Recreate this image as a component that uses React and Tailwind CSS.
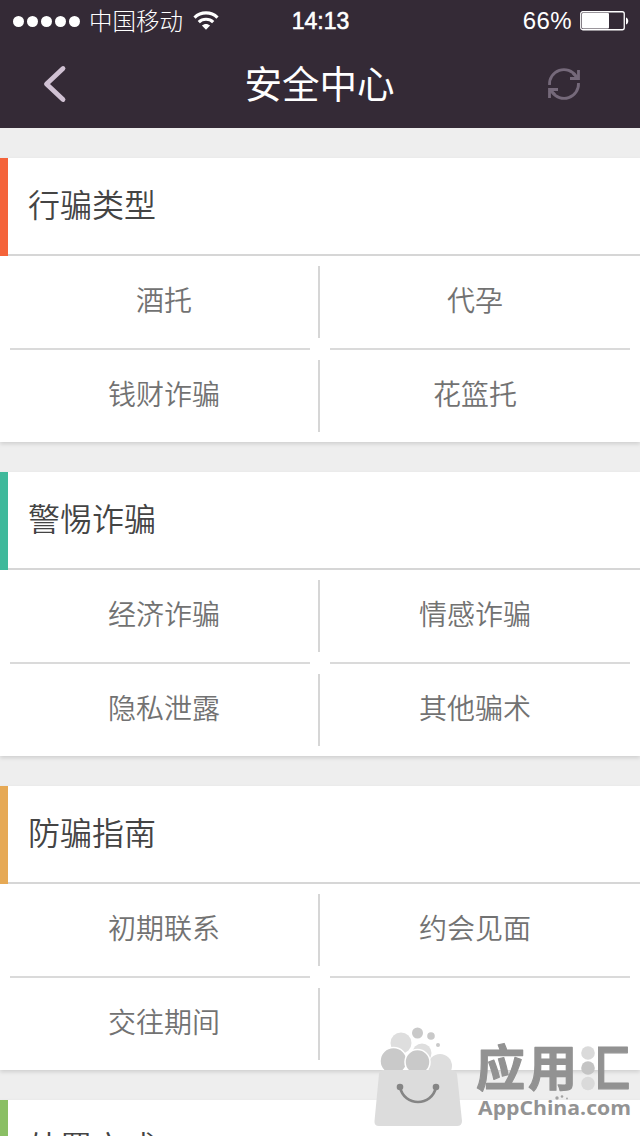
const sections = [
  {
    title: '行骗类型',
    accent: 'bg-[#f4633a]',
    rows: [['酒托', '代孕'], ['钱财诈骗', '花篮托']],
  },
  {
    title: '警惕诈骗',
    accent: 'bg-[#3fb99b]',
    rows: [['经济诈骗', '情感诈骗'], ['隐私泄露', '其他骗术']],
  },
  {
    title: '防骗指南',
    accent: 'bg-[#e6a955]',
    rows: [['初期联系', '约会见面'], ['交往期间', '']],
  },
  {
    title: '处置方式',
    accent: 'bg-[#8abf64]',
    rows: [],
  },
]

function StatusBar() {
  return (
    <div className="grid grid-cols-3 items-center h-10 pl-[13px] pr-[11px] text-[23px] leading-10">
      <div className="flex items-center">
        <div className="flex gap-[3px]">
          {[0, 1, 2, 3, 4].map((i) => (
            <span key={i} className="w-[11px] h-[11px] rounded-full bg-white" />
          ))}
        </div>
        <span className="ml-[9px] pt-0.5 text-[23.5px] font-light whitespace-nowrap">中国移动</span>
        <svg className="ml-[10px] shrink-0" width="26" height="20" viewBox="0 0 26 20" fill="none" stroke="#fff" strokeWidth="3.2">
          <path d="M1.5 6.6C8 .4 18 .4 24.5 6.6" />
          <path d="M5.8 11.1C9.8 7.3 16.2 7.3 20.2 11.1" />
          <path d="M13 18.8L8.9 14.6C11.2 12.5 14.8 12.5 17.1 14.6Z" fill="#fff" stroke="none" />
        </svg>
      </div>
      <span className="-ml-px text-center [-webkit-text-stroke:0.6px_#fff]">14:13</span>
      <div className="flex items-center justify-end">
        <span className="text-[24px] tracking-[0.4px]">66%</span>
        <svg className="ml-2" width="49" height="20" viewBox="0 0 49 20">
          <rect x="0.75" y="0.75" width="43.5" height="18" rx="2" fill="none" stroke="#fff" strokeWidth="1.3" />
          <rect x="2" y="2" width="27" height="15.5" rx="1" fill="#fff" />
          <path d="M46 6.5C49 7.5 49 12.5 46 13.5Z" fill="#fff" />
        </svg>
      </div>
    </div>
  )
}

function NavBar() {
  return (
    <div className="flex items-center justify-between h-[88px] pl-[43px] pr-[58px]">
      <svg width="24" height="38" viewBox="0 0 24 38" fill="none" stroke="#d0c1d3" strokeWidth="4.8" strokeLinecap="round" strokeLinejoin="round">
        <path d="M20 3.5L3.5 19L20 34.5" />
      </svg>
      <h1 className="ml-[26px] pt-[3px] text-[37.5px] leading-none">安全中心</h1>
      <svg width="36" height="36" viewBox="0 0 36 36" fill="none" stroke="#75697a" strokeWidth="2.8">
        <path d="M3.5 19A14.500 14.500 0 0 1 30 10" />
        <path d="M32.5 17A14.500 14.500 0 0 1 6 26" />
        <path d="M32.5 4V12.5H24M32 12L27 7.5" />
        <path d="M3.5 32V23.5H12M4 24L9 28.5" />
      </svg>
    </div>
  )
}

function Section({ title, accent, rows }) {
  return (
    <section className="bg-white shadow-[0_2px_4px_rgba(0,0,0,0.13)]">
      <div className="flex h-[98px]">
        <div className={`w-2 ${accent}`} />
        <h2 className="flex-1 pl-5 pt-6 border-b-2 border-[#d6d6d6] text-[32px] leading-[48px] font-[350] text-[#444444]">
          {title}
        </h2>
      </div>
      {rows.map(([left, right], i) => (
        <div key={left}>
          {i > 0 && (
            <div className="flex justify-between px-[10px]">
              <div className="w-[300px] h-0.5 bg-[#dadada]" />
              <div className="w-[300px] h-0.5 bg-[#dadada]" />
            </div>
          )}
          <div className="flex h-[92px] px-[10px] py-[10px] text-center text-[28px] leading-[72px] font-[350] text-[#727272]">
            <div className="w-[310px] border-r-2 border-[#d6d6d6]">{left}</div>
            <div className="w-[310px]">{right}</div>
          </div>
        </div>
      ))}
    </section>
  )
}

function Watermark() {
  return (
    <svg className="absolute left-[360px] top-[1010px]" width="280" height="126" viewBox="0 0 280 126">
      <defs>
        {/* hides the water radical, the three dots stand in for it */}
        <clipPath id="hui">
          <rect x="238" y="20" width="42" height="70" />
        </clipPath>
      </defs>
      <g fill="#dedede">
        <circle cx="62" cy="43" r="9.5" />
        <circle cx="41" cy="33" r="10.5" />
        <circle cx="80" cy="56" r="12" />
      </g>
      <g fill="#c9c9c9">
        <circle cx="57.5" cy="23" r="5.5" />
        <circle cx="71" cy="26" r="3.8" />
        <circle cx="78" cy="35" r="2" />
        <circle cx="33.5" cy="51" r="13.5" stroke="#fff" strokeWidth="1.5" />
        <circle cx="57.5" cy="52" r="12.5" stroke="#fff" strokeWidth="1.5" />
      </g>
      <path d="M24 60H92Q96 60 97 64L102 111Q102 116 97 116H19Q14 116 14.5 111L19 64Q20 60 24 60Z" fill="#dcdcdc" />
      <g fill="#858585">
        <circle cx="40" cy="77" r="3.3" />
        <circle cx="76" cy="77" r="3.3" />
      </g>
      <path d="M40 77C44 97 72 97 76 77" fill="none" stroke="#858585" strokeWidth="2.7" />
      <g fill="#929292" stroke="#929292" strokeWidth="1.2" strokeLinejoin="round" className="font-bold">
        <text x="116" y="76" fontSize="49" textLength="101">应用</text>
        <text x="221" y="76" fontSize="49" clipPath="url(#hui)">汇</text>
      </g>
      <circle cx="228" cy="43" r="6.8" fill="#dadada" />
      <circle cx="228" cy="58" r="6.8" fill="#c4c4c4" />
      <circle cx="228" cy="73.5" r="6.8" fill="#dadada" />
      <text x="118" y="105" fontSize="19.5" textLength="153" lengthAdjust="spacingAndGlyphs" fill="#939393" className="font-['Open_Sans'] font-bold">
        AppChina.com
      </text>
      <g fill="#a2a2a2">
        <circle cx="197" cy="88" r="1.7" />
        <circle cx="202" cy="86.5" r="1.3" />
        <circle cx="207" cy="88.5" r="0.9" />
      </g>
    </svg>
  )
}

export default function App() {
  return (
    <div className="relative w-[640px] h-[1136px] overflow-hidden bg-[#eeeeee] font-['Liberation_Sans','Noto_Sans_CJK_SC',sans-serif]">
      <header className="h-32 bg-[#342a36] text-white">
        <StatusBar />
        <NavBar />
      </header>
      <main className="flex flex-col gap-[30px] pt-[30px]">
        {sections.map((section) => (
          <Section key={section.title} {...section} />
        ))}
      </main>
      <Watermark />
    </div>
  )
}
